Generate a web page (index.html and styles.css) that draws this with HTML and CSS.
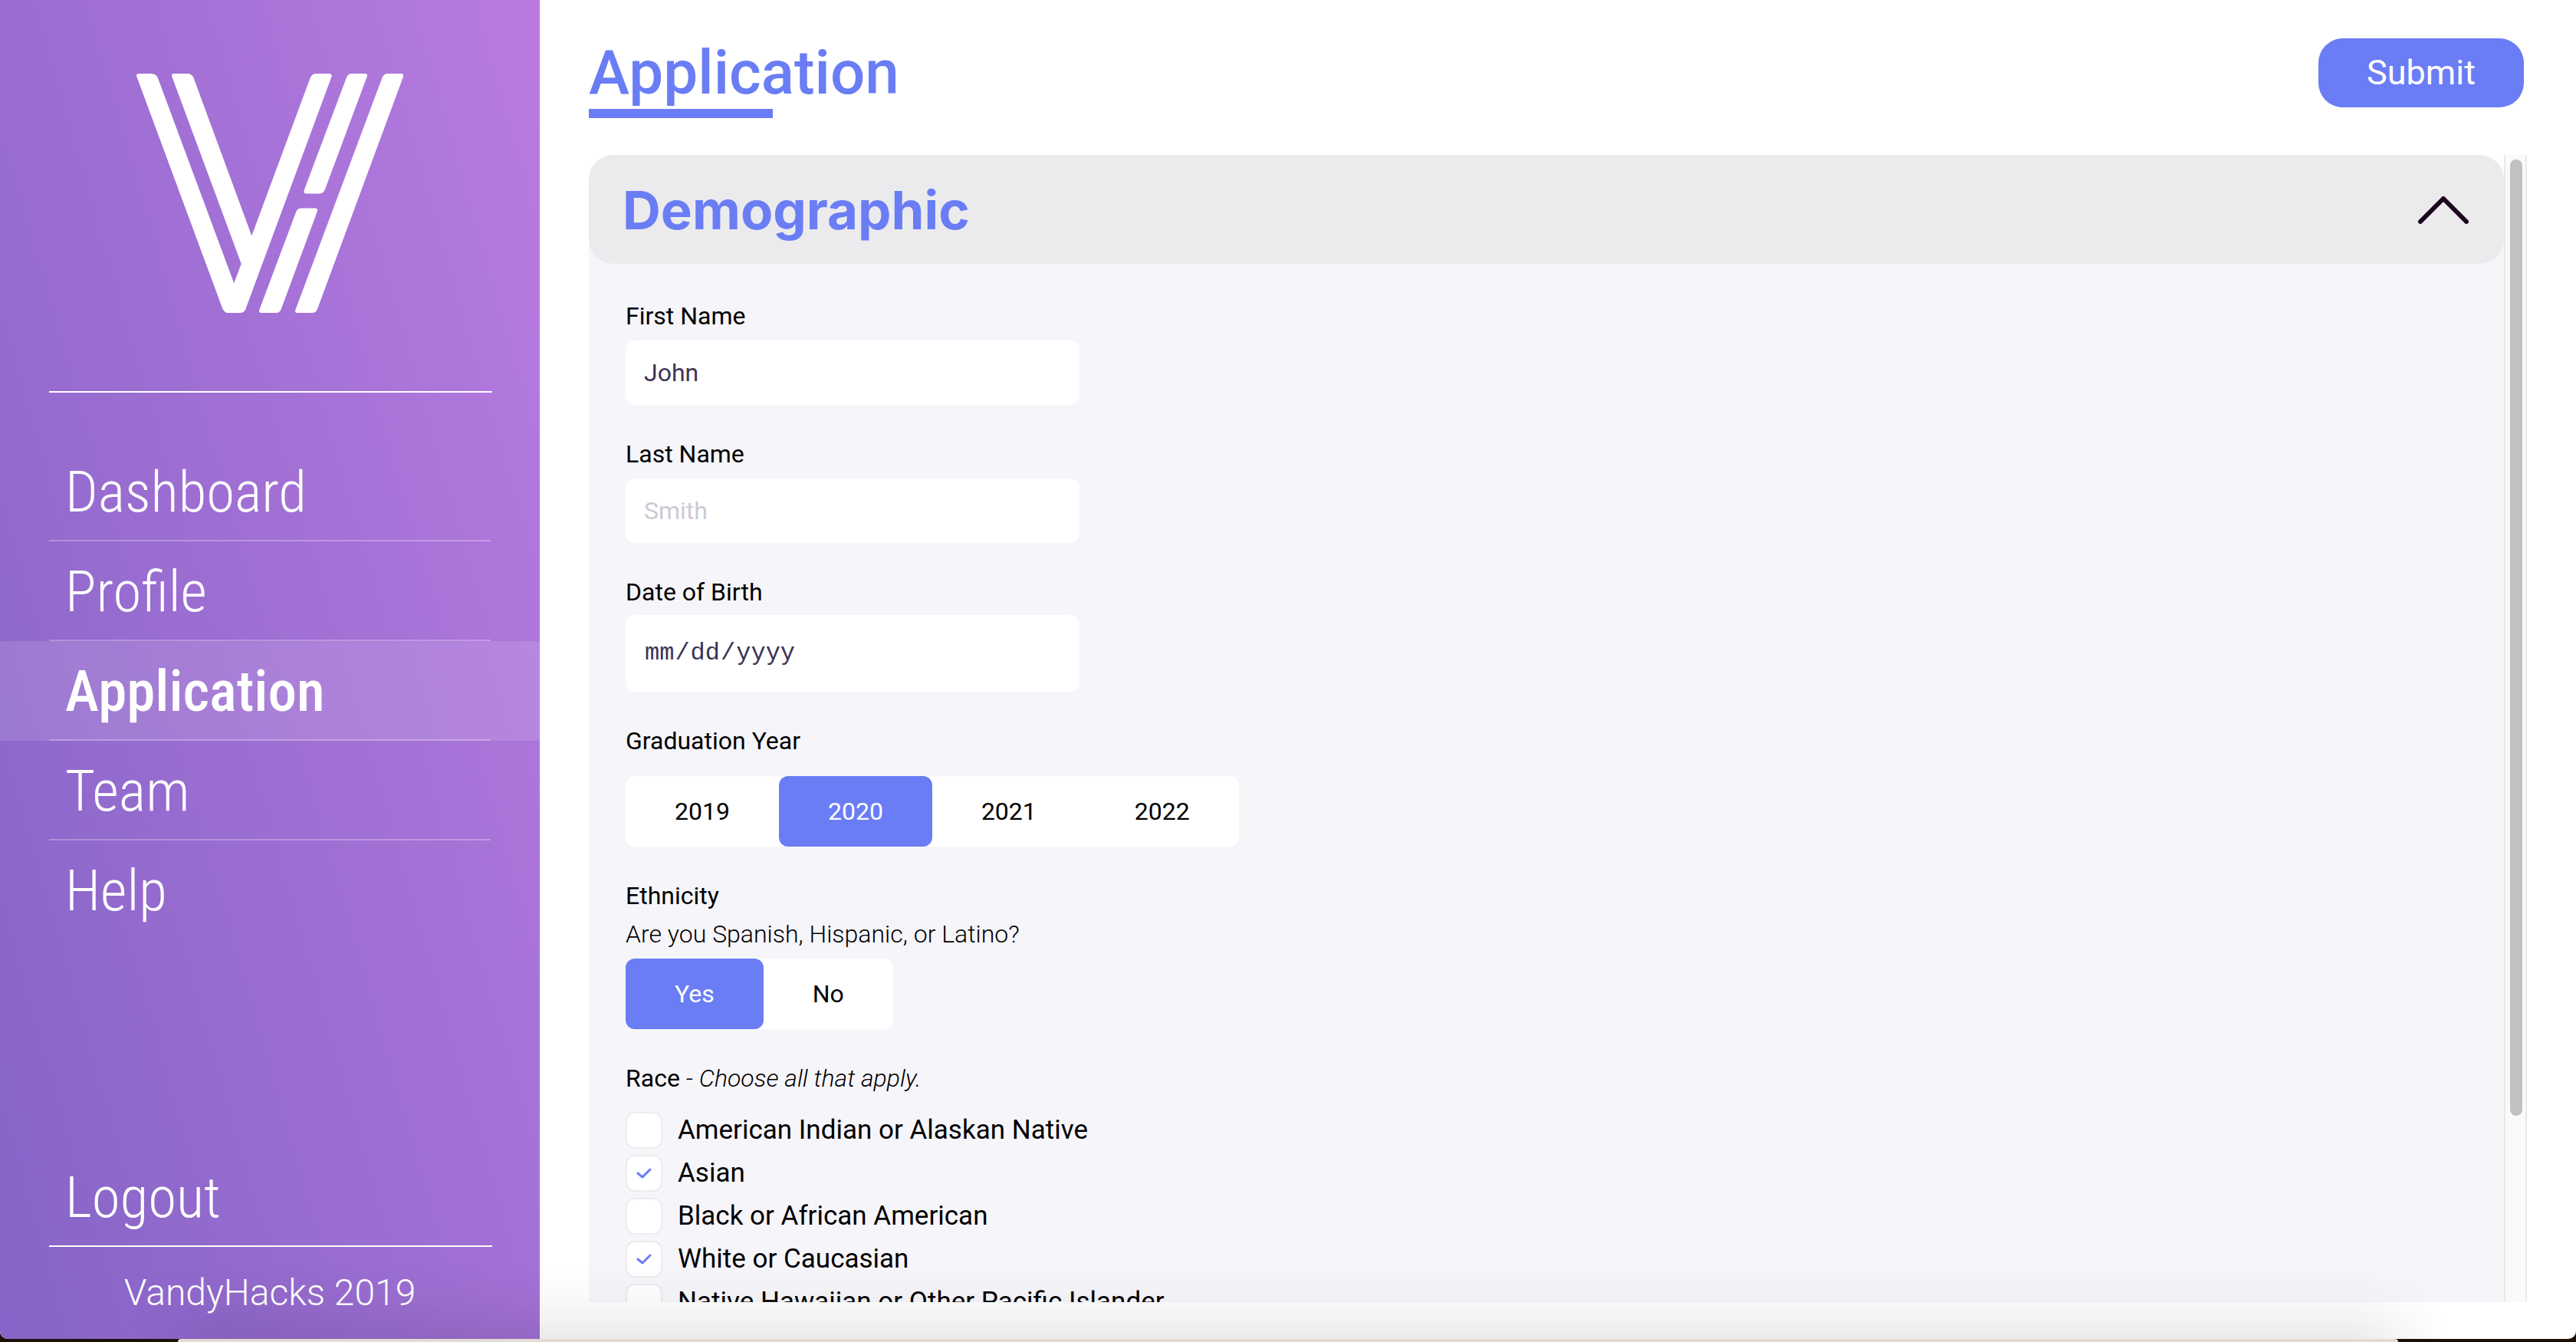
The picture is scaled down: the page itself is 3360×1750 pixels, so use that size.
FILE: index.html
```html
<!DOCTYPE html>
<html lang="en">
<head>
<meta charset="utf-8">
<title>VandyHacks Application</title>
<link rel="stylesheet" href="styles.css">
</head>
<body>
<div class="window">
  <aside class="sidebar">
    <svg class="logo" viewBox="0 0 348 312" role="img" aria-label="VandyHacks">
      <path d="M0 3Q-.5 0 3 0H19Q26 0 28 6L127.200 273.200L136.700 247.900L46.200 3.500Q45.500 0 49 0H66Q72 0 74.300 5L150.300 211.400L226.900 5Q229 0 235 0H251Q255.500 0 254.500 4L142.200 307.500Q140 312 135 312H119Q115.500 312 112.300 306.500Z"/>
      <path d="M274 5Q276 0 281 0H298Q302 0 300.700 4L246 150.700Q244 156.400 239 156.400H221Q217.500 156.400 218.700 152Z"/>
      <path d="M208.300 180Q210 175.500 215 175.500H233Q237 175.500 235.900 179.500L188.800 307Q187 312 182 312H163Q159 312 160.300 308Z"/>
      <path d="M320.600 5Q323 0 328 0H345Q349 0 348 4L236 307Q234 312 229 312H210Q206 312 207.400 308Z"/>
    </svg>
    <nav class="menu" aria-label="Main">
      <a class="menu-item" href="#dashboard">Dashboard</a>
      <a class="menu-item" href="#profile">Profile</a>
      <a class="menu-item active" href="#application" aria-current="page">Application</a>
      <a class="menu-item" href="#team">Team</a>
      <a class="menu-item" href="#help">Help</a>
    </nav>
    <a class="menu-item logout" href="#logout">Logout</a>
    <p class="copyright">VandyHacks 2019</p>
  </aside>

  <main class="content">
    <header class="page-header">
      <h1 class="page-title">Application</h1>
      <button class="submit" type="submit" form="application-form">Submit</button>
    </header>
    <div class="scroller">
      <form class="panel" id="application-form">
        <button class="panel-header" type="button" aria-expanded="true">
          <span>Demographic</span>
          <svg class="chevron" viewBox="0 0 66 36" aria-hidden="true"><path d="M3 33L33 3L63 33"/></svg>
        </button>
        <div class="fields">
          <div class="field">
            <label for="first-name">First Name</label>
            <input class="text-input" id="first-name" type="text" value="John">
          </div>
          <div class="field">
            <label for="last-name">Last Name</label>
            <input class="text-input" id="last-name" type="text" placeholder="Smith">
          </div>
          <div class="field field-date">
            <label for="birth-date">Date of Birth</label>
            <input class="text-input date-input" id="birth-date" type="date">
          </div>
          <fieldset class="field field-years">
            <legend>Graduation Year</legend>
            <div class="toggle">
              <label><input type="radio" name="year"><span>2019</span></label>
              <label><input type="radio" name="year" checked><span>2020</span></label>
              <label><input type="radio" name="year"><span>2021</span></label>
              <label><input type="radio" name="year"><span>2022</span></label>
            </div>
          </fieldset>
          <fieldset class="field">
            <legend>Ethnicity</legend>
            <p class="hint">Are you Spanish, Hispanic, or Latino?</p>
            <div class="toggle">
              <label><input type="radio" name="ethnicity" checked><span>Yes</span></label>
              <label><input type="radio" name="ethnicity"><span>No</span></label>
            </div>
          </fieldset>
          <fieldset class="field field-race">
            <legend>Race <span class="note">- <em>Choose all that apply.</em></span></legend>
            <div class="checks">
              <label class="check"><input type="checkbox"><svg viewBox="0 0 20 14" aria-hidden="true"><path d="M2 7L8 12L18 2"/></svg><span>American Indian or Alaskan Native</span></label>
              <label class="check"><input type="checkbox" checked><svg viewBox="0 0 20 14" aria-hidden="true"><path d="M2 7L8 12L18 2"/></svg><span>Asian</span></label>
              <label class="check"><input type="checkbox"><svg viewBox="0 0 20 14" aria-hidden="true"><path d="M2 7L8 12L18 2"/></svg><span>Black or African American</span></label>
              <label class="check"><input type="checkbox" checked><svg viewBox="0 0 20 14" aria-hidden="true"><path d="M2 7L8 12L18 2"/></svg><span>White or Caucasian</span></label>
              <label class="check"><input type="checkbox"><svg viewBox="0 0 20 14" aria-hidden="true"><path d="M2 7L8 12L18 2"/></svg><span>Native Hawaiian or Other Pacific Islander</span></label>
            </div>
          </fieldset>
        </div>
      </form>
      <div class="track" aria-hidden="true"><div class="thumb"></div></div>
    </div>
  </main>
</div>
<div class="dock" aria-hidden="true"></div>
</body>
</html>
```
FILE: styles.css
```css
* { box-sizing: border-box; }

body {
  margin: 0;
  height: 100vh;
  display: flex;
  flex-direction: column;
  overflow: hidden;
  position: relative;
  background: #1c1006;
  color: #000;
  font: 400 32px/40px Roboto, "Liberation Sans", sans-serif;
}

.window {
  flex: 1;
  min-height: 0;
  margin-bottom: 4px;
  display: flex;
  background: #fff;
  border-radius: 0 0 10px 10px;
  overflow: hidden;
}

/* Edge of the window that lies below this one, with its shadow */
.dock {
  position: absolute;
  left: 232px;
  right: 232px;
  bottom: 0;
  height: 4px;
  border-radius: 4px 4px 0 0;
  background: #e3dcd6;
  pointer-events: none;
}

.dock::before {
  content: "";
  position: absolute;
  left: -60px;
  right: -60px;
  bottom: 4px;
  height: 100px;
  background: linear-gradient(transparent, rgba(0, 0, 0, .02) 45%, rgba(0, 0, 0, .08));
  mask-image: linear-gradient(90deg, transparent, #000 120px calc(100% - 120px), transparent);
}

/* Sidebar */
.sidebar {
  flex: 0 0 704px;
  display: flex;
  flex-direction: column;
  background: linear-gradient(74deg, #8464c6, #a672d7 64%, #b178dd 86%, #bc7ae0);
  color: #fff;
}

.logo {
  width: 348px;
  height: 312px;
  margin: 96px auto 102px;
  fill: #fff;
}

.menu {
  display: flex;
  flex-direction: column;
  padding-top: 66px;
  background: linear-gradient(#fff, #fff) 64px 0 / calc(100% - 126px) 2px no-repeat;
}

.menu-item {
  height: 130px;
  padding-left: 85px;
  color: inherit;
  font: 300 75px/130px "Roboto Condensed", Roboto, sans-serif;
  text-decoration: none;
  background: linear-gradient(#fff4, #fff4) 64px 100% / calc(100% - 128px) 2px no-repeat;
}

.menu-item.active {
  font-weight: 500;
  background-color: #ffffff1f;
}

.menu-item:last-child { background: none; }

.menu-item.logout {
  margin-top: auto;
  background: linear-gradient(#fff, #fff) 64px 100% / calc(100% - 126px) 2px no-repeat;
}

.copyright {
  margin: 28px 0 28px;
  font-size: 48px;
  line-height: 64px;
  font-weight: 300;
  text-align: center;
}

/* Page */
.content {
  flex: 1;
  min-width: 0;
  display: flex;
  flex-direction: column;
  padding: 50px 64px 48px;
}

.page-header {
  display: flex;
  justify-content: space-between;
  align-items: flex-start;
  padding-right: 4px;
  margin-bottom: 48px;
}

.page-title {
  margin: 0;
  font-size: 80px;
  line-height: 90px;
  font-weight: 500;
  color: #6a7df5;
}

.page-title::after {
  content: "";
  display: block;
  width: 240px;
  height: 12px;
  margin-top: 2px;
  background: #6a7df5;
}

.submit {
  width: 268px;
  height: 90px;
  border: 0;
  border-radius: 32px;
  background: #6a7df5;
  color: #fff;
  font: 400 45px/56px Roboto, sans-serif;
}

.scroller {
  flex: 1;
  min-height: 0;
  display: flex;
}

.panel {
  flex: 1;
  min-width: 0;
  overflow: hidden;
  border-radius: 32px 32px 0 0;
  background: #f6f5fa;
}

.panel-header {
  width: 100%;
  height: 142px;
  display: flex;
  justify-content: space-between;
  align-items: center;
  padding: 2px 46px 0 44px;
  border: 0;
  border-radius: 32px;
  background: #ebebed;
  color: #6a7df5;
  font: 700 69px/88px Inter, sans-serif;
}

.chevron {
  width: 66px;
  height: 36px;
  fill: none;
  stroke: #1b061e;
  stroke-width: 6;
  stroke-linecap: round;
  stroke-linejoin: round;
}

.track {
  width: 30px;
  padding: 6px;
  border: solid #e8e8e8;
  border-width: 0 2px;
  background: #fafafa;
}

.thumb {
  width: 16px;
  height: 84%;
  border-radius: 8px;
  background: #c1c1c1;
}

/* Form */
.fields {
  display: flex;
  flex-direction: column;
  gap: 44px;
  padding: 48px;
}

.field {
  display: flex;
  flex-direction: column;
  align-items: flex-start;
  gap: 12px;
  min-width: 0;
  margin: 0;
  padding: 0;
  border: 0;
}

fieldset.field { display: block; }
legend { padding: 0; }

.text-input {
  width: 592px;
  height: 84px;
  padding: 0 24px;
  border: 0;
  border-radius: 12px;
  background: #fff;
  color: #3e3355;
  font: 400 32px/40px Roboto, sans-serif;
}

.text-input::placeholder { color: #cfc8d6; }

.field-date { gap: 10px; }

.date-input {
  height: 100px;
  font-family: "Courier New", "Liberation Mono", monospace;
}

.date-input::-webkit-calendar-picker-indicator { display: none; }

.field-years .toggle { margin-top: 26px; }

.hint {
  margin: 10px 0 12px;
  font-weight: 300;
}

.toggle {
  display: inline-flex;
  vertical-align: top;
  border-radius: 12px;
  background: #fff;
}

.toggle input {
  position: absolute;
  opacity: 0;
}

.toggle span {
  display: block;
  padding: 26px 64px;
  border-radius: 12px;
}

.toggle :checked + span {
  background: #6a7df5;
  color: #fff;
}

.note { font-weight: 300; }

.checks {
  display: flex;
  flex-direction: column;
  padding-top: 20px;
}

.check {
  display: grid;
  grid-template-columns: 48px 1fr;
  column-gap: 20px;
  align-items: center;
  height: 56px;
  font-size: 35px;
}

.check input {
  grid-area: 1 / 1;
  appearance: none;
  width: 48px;
  height: 48px;
  margin: 0;
  border: 2px solid #ececee;
  border-radius: 12px;
  background: #fff;
}

.check svg {
  grid-area: 1 / 1;
  justify-self: center;
  width: 20px;
  height: 14px;
  fill: none;
  stroke: #6a7df5;
  stroke-width: 3;
  stroke-linecap: round;
  stroke-linejoin: round;
  visibility: hidden;
}

.check :checked + svg { visibility: visible; }
```
